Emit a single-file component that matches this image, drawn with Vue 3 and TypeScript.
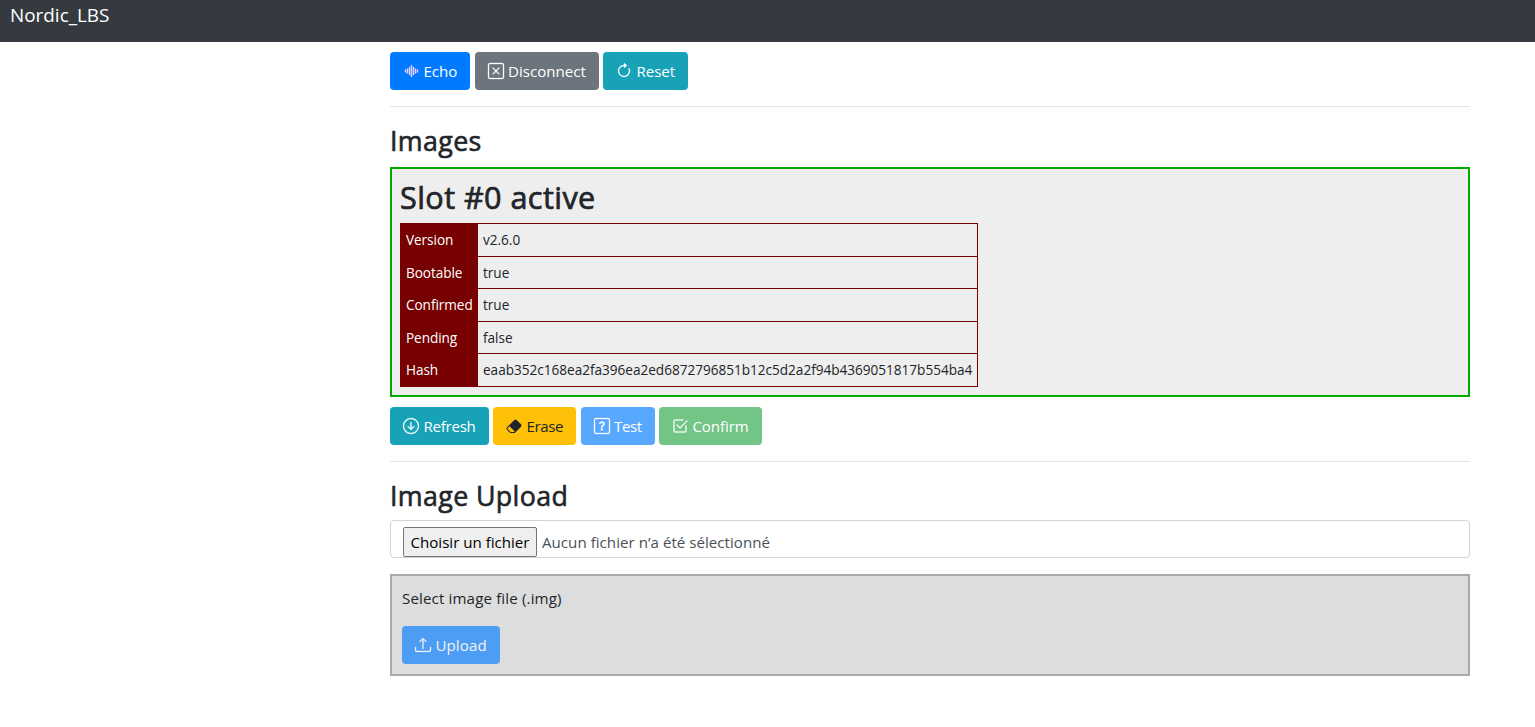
<script setup lang="ts">
interface Action {
  id: string
  label: string
  tone: string
  disabled?: boolean
  paths: string[]
}

const deviceName = 'Nordic_LBS'

const deviceActions: Action[] = [
  {
    id: 'echo',
    label: 'Echo',
    tone: 'primary',
    paths: [
      'M8.5 2a.5.5 0 0 1 .5.5v11a.5.5 0 0 1-1 0v-11a.5.5 0 0 1 .5-.5zm-2 2a.5.5 0 0 1 .5.5v7a.5.5 0 0 1-1 0v-7a.5.5 0 0 1 .5-.5zm4 0a.5.5 0 0 1 .5.5v7a.5.5 0 0 1-1 0v-7a.5.5 0 0 1 .5-.5zm-6 1.5A.5.5 0 0 1 5 6v4a.5.5 0 0 1-1 0V6a.5.5 0 0 1 .5-.5zm8 0a.5.5 0 0 1 .5.5v4a.5.5 0 0 1-1 0V6a.5.5 0 0 1 .5-.5zm-10 1A.5.5 0 0 1 3 7v2a.5.5 0 0 1-1 0V7a.5.5 0 0 1 .5-.5zm12 0a.5.5 0 0 1 .5.5v2a.5.5 0 0 1-1 0V7a.5.5 0 0 1 .5-.5z',
    ],
  },
  {
    id: 'disconnect',
    label: 'Disconnect',
    tone: 'secondary',
    paths: [
      'M14 1a1 1 0 0 1 1 1v12a1 1 0 0 1-1 1H2a1 1 0 0 1-1-1V2a1 1 0 0 1 1-1h12zM2 0a2 2 0 0 0-2 2v12a2 2 0 0 0 2 2h12a2 2 0 0 0 2-2V2a2 2 0 0 0-2-2H2z',
      'M4.646 4.646a.5.5 0 0 1 .708 0L8 7.293l2.646-2.647a.5.5 0 0 1 .708.708L8.707 8l2.647 2.646a.5.5 0 0 1-.708.708L8 8.707l-2.646 2.647a.5.5 0 0 1-.708-.708L7.293 8 4.646 5.354a.5.5 0 0 1 0-.708z',
    ],
  },
  {
    id: 'reset',
    label: 'Reset',
    tone: 'info',
    paths: [
      'M8 3a5 5 0 1 0 4.546 2.914.5.5 0 0 1 .908-.417A6 6 0 1 1 8 2v1z',
      'M8 4.466V.534a.25.25 0 0 1 .41-.192l2.36 1.966c.12.1.12.284 0 .384L8.41 4.658A.25.25 0 0 1 8 4.466z',
    ],
  },
]

const imageActions: Action[] = [
  {
    id: 'refresh',
    label: 'Refresh',
    tone: 'info',
    paths: [
      'M1 8a7 7 0 1 0 14 0A7 7 0 0 0 1 8zm15 0A8 8 0 1 1 0 8a8 8 0 0 1 16 0zM8.5 4.5a.5.5 0 0 0-1 0v5.793L5.354 8.146a.5.5 0 1 0-.708.708l3 3a.5.5 0 0 0 .708 0l3-3a.5.5 0 0 0-.708-.708L8.5 10.293V4.5z',
    ],
  },
  {
    id: 'erase',
    label: 'Erase',
    tone: 'warning',
    paths: [
      'M8.086 2.207a2 2 0 0 1 2.828 0l3.879 3.879a2 2 0 0 1 0 2.828l-5.5 5.5A2 2 0 0 1 7.879 15H5.12a2 2 0 0 1-1.414-.586l-2.5-2.5a2 2 0 0 1 0-2.828l6.879-6.879zm.66 11.34L3.453 8.254 1.914 9.793a1 1 0 0 0 0 1.414l2.5 2.5a1 1 0 0 0 .707.293H7.88a1 1 0 0 0 .707-.293l.16-.16z',
    ],
  },
  {
    id: 'test',
    label: 'Test',
    tone: 'primary',
    disabled: true,
    paths: [
      'M14 1a1 1 0 0 1 1 1v12a1 1 0 0 1-1 1H2a1 1 0 0 1-1-1V2a1 1 0 0 1 1-1h12zM2 0a2 2 0 0 0-2 2v12a2 2 0 0 0 2 2h12a2 2 0 0 0 2-2V2a2 2 0 0 0-2-2H2z',
      'M5.255 5.786a.237.237 0 0 0 .241.247h.825c.138 0 .248-.113.266-.25.09-.656.54-1.134 1.342-1.134.686 0 1.314.343 1.314 1.168 0 .635-.374.927-.965 1.371-.673.489-1.206 1.06-1.168 1.987l.003.217a.25.25 0 0 0 .25.246h.811a.25.25 0 0 0 .25-.25v-.105c0-.718.273-.927 1.01-1.486.609-.463 1.244-.977 1.244-2.056 0-1.511-1.276-2.241-2.673-2.241-1.267 0-2.655.59-2.75 2.286zm1.557 5.763c0 .533.425.927 1.01.927.609 0 1.028-.394 1.028-.927 0-.552-.42-.94-1.029-.94-.584 0-1.009.388-1.009.94z',
    ],
  },
  {
    id: 'confirm',
    label: 'Confirm',
    tone: 'success',
    disabled: true,
    paths: [
      'M3 14.5A1.5 1.5 0 0 1 1.5 13V3A1.5 1.5 0 0 1 3 1.5h8a.5.5 0 0 1 0 1H3a.5.5 0 0 0-.5.5v10a.5.5 0 0 0 .5.5h10a.5.5 0 0 0 .5-.5V8a.5.5 0 0 1 1 0v5a1.5 1.5 0 0 1-1.5 1.5H3z',
      'm8.354 10.354 7-7a.5.5 0 0 0-.708-.708L8 9.293 5.354 6.646a.5.5 0 1 0-.708.708l3 3a.5.5 0 0 0 .708 0z',
    ],
  },
]

const uploadPaths: string[] = [
  'M.5 9.9a.5.5 0 0 1 .5.5v2.5a1 1 0 0 0 1 1h12a1 1 0 0 0 1-1v-2.5a.5.5 0 0 1 1 0v2.5a2 2 0 0 1-2 2H2a2 2 0 0 1-2-2v-2.5a.5.5 0 0 1 .5-.5z',
  'M7.646 1.146a.5.5 0 0 1 .708 0l3 3a.5.5 0 0 1-.708.708L8.5 2.707V11.5a.5.5 0 0 1-1 0V2.707L5.354 4.854a.5.5 0 1 1-.708-.708l3-3z',
]

const slotRows: { key: string; value: string }[] = [
  { key: 'Version', value: 'v2.6.0' },
  { key: 'Bootable', value: 'true' },
  { key: 'Confirmed', value: 'true' },
  { key: 'Pending', value: 'false' },
  { key: 'Hash', value: 'eaab352c168ea2fa396ea2ed6872796851b12c5d2a2f94b4369051817b554ba4' },
]
</script>

<template>
  <div class="page">
    <header class="topbar">{{ deviceName }}</header>
    <main class="content">
      <div class="actions">
        <button v-for="a in deviceActions" :key="a.id" class="btn" :class="[a.tone, a.id]" type="button">
          <svg class="icon" viewBox="0 0 16 16"><path v-for="p in a.paths" :key="p" :d="p" /></svg>
          <span>{{ a.label }}</span>
        </button>
      </div>
      <hr class="rule" />

      <h3 class="title">Images</h3>
      <section class="slot">
        <h2 class="slot-title">Slot #0 active</h2>
        <table class="info-table">
          <tbody>
            <tr v-for="row in slotRows" :key="row.key">
              <th>{{ row.key }}</th>
              <td>{{ row.value }}</td>
            </tr>
          </tbody>
        </table>
      </section>
      <div class="actions">
        <button
          v-for="a in imageActions"
          :key="a.id"
          class="btn"
          :class="[a.tone, a.id]"
          :disabled="a.disabled"
          type="button"
        >
          <svg class="icon" viewBox="0 0 16 16"><path v-for="p in a.paths" :key="p" :d="p" /></svg>
          <span>{{ a.label }}</span>
        </button>
      </div>
      <hr class="rule" />

      <h3 class="title upload-title">Image Upload</h3>
      <div class="file-field">
        <button class="file-button" type="button">Choisir un fichier</button>
        <span class="file-status">Aucun fichier n’a été sélectionné</span>
      </div>
      <section class="upload-box">
        <p class="hint">Select image file (.img)</p>
        <button class="btn primary upload" type="button" disabled>
          <svg class="icon" viewBox="0 0 16 16"><path v-for="p in uploadPaths" :key="p" :d="p" /></svg>
          <span>Upload</span>
        </button>
      </section>
    </main>
  </div>
</template>

<style>
body {
  margin: 0;
  background: #fff;
}
</style>

<style scoped>
.page {
  height: 727px;
  overflow: hidden;
  color: #212529;
  font-family: 'Segoe UI', 'Open Sans', 'Noto Sans', sans-serif;
  font-size: 15.1px;
  line-height: 24px;
}
.topbar {
  box-sizing: border-box;
  height: 42px;
  padding: 0 10px;
  background: #343a40;
  color: #fff;
  font-size: 18.9px;
  line-height: 30px;
}
.content {
  width: 1080px;
  margin-left: 390px;
  padding-top: 10px;
}
.actions {
  display: flex;
  gap: 4.4px;
}
.btn {
  box-sizing: border-box;
  display: flex;
  align-items: center;
  gap: 4.4px;
  height: 38px;
  padding: 0 0 0 13px;
  border: 0;
  border-radius: 4px;
  color: #fff;
  font: inherit;
  white-space: nowrap;
}
.btn:disabled {
  opacity: 0.65;
}
.icon {
  flex: none;
  width: 16px;
  height: 16px;
  overflow: visible;
  fill: currentColor;
  stroke: currentColor;
  stroke-width: 0.3;
}
.primary { background: #007bff; }
.secondary { background: #6c757d; }
.info { background: #17a2b8; }
.warning { background: #ffc107; color: #212529; }
.success { background: #28a745; }

.echo { width: 80.3px; }
.echo .icon { color: #ecd0ff; stroke-width: 0.45; }
.disconnect { width: 124px; }
.reset { width: 85px; letter-spacing: -0.05px; }
.refresh { width: 98.7px; letter-spacing: -0.25px; }
.erase { width: 83.2px; letter-spacing: -0.4px; }
.erase .icon { stroke: none; }
.test { width: 74px; letter-spacing: -0.4px; }
.confirm { width: 103px; letter-spacing: -0.1px; }
.upload { width: 98px; letter-spacing: 0.1px; }

.rule {
  height: 1px;
  margin: 16px 0;
  border: 0;
  background: #e5e5e5;
}
.title {
  box-sizing: border-box;
  height: 33.6px;
  margin: 0 0 10px;
  padding-top: 1px;
  font-size: 26.8px;
  font-weight: 500;
  line-height: 33.6px;
  letter-spacing: 0.36px;
  -webkit-text-stroke: 0.6px currentColor;
}
.upload-title {
  margin-bottom: 8px;
}
.slot {
  box-sizing: border-box;
  height: 230px;
  margin-bottom: 10.4px;
  padding: 8px;
  border: 2px solid #0a0;
  background: #eee;
}
.slot-title {
  box-sizing: border-box;
  height: 38.4px;
  margin: 0 0 8px;
  padding-top: 1px;
  font-size: 30.6px;
  font-weight: 500;
  line-height: 38.4px;
  letter-spacing: 0.43px;
  -webkit-text-stroke: 0.7px currentColor;
}
.info-table {
  width: 578px;
  table-layout: fixed;
  border-collapse: collapse;
  font-size: 13.6px;
  line-height: 21.6px;
  letter-spacing: -0.015px;
}
.info-table th,
.info-table td {
  padding: 5px;
  border: 1px solid #700;
  text-align: left;
  font-weight: 400;
  white-space: nowrap;
}
.info-table th {
  width: 66px;
  background: #700;
  color: #fff;
  letter-spacing: -0.06px;
}
.file-field {
  box-sizing: border-box;
  display: flex;
  align-items: flex-start;
  gap: 5px;
  height: 38px;
  padding: 6px 12px 0;
  border: 1px solid #ced4da;
  border-radius: 4px;
  color: #495057;
}
.file-button {
  box-sizing: border-box;
  width: 134px;
  height: 30px;
  padding: 0;
  border: 1px solid #767676;
  border-radius: 2px;
  background: #efefef;
  color: #000;
  font: inherit;
  line-height: 28px;
  white-space: nowrap;
}
.file-status {
  line-height: 30px;
  letter-spacing: 0.03px;
}
.upload-box {
  box-sizing: border-box;
  height: 102px;
  margin-top: 16.4px;
  padding: 10px;
  border: 2px solid #a9a9a9;
  background: #ddd;
}
.hint {
  margin: 0 0 16px;
  letter-spacing: 0.14px;
}
</style>
